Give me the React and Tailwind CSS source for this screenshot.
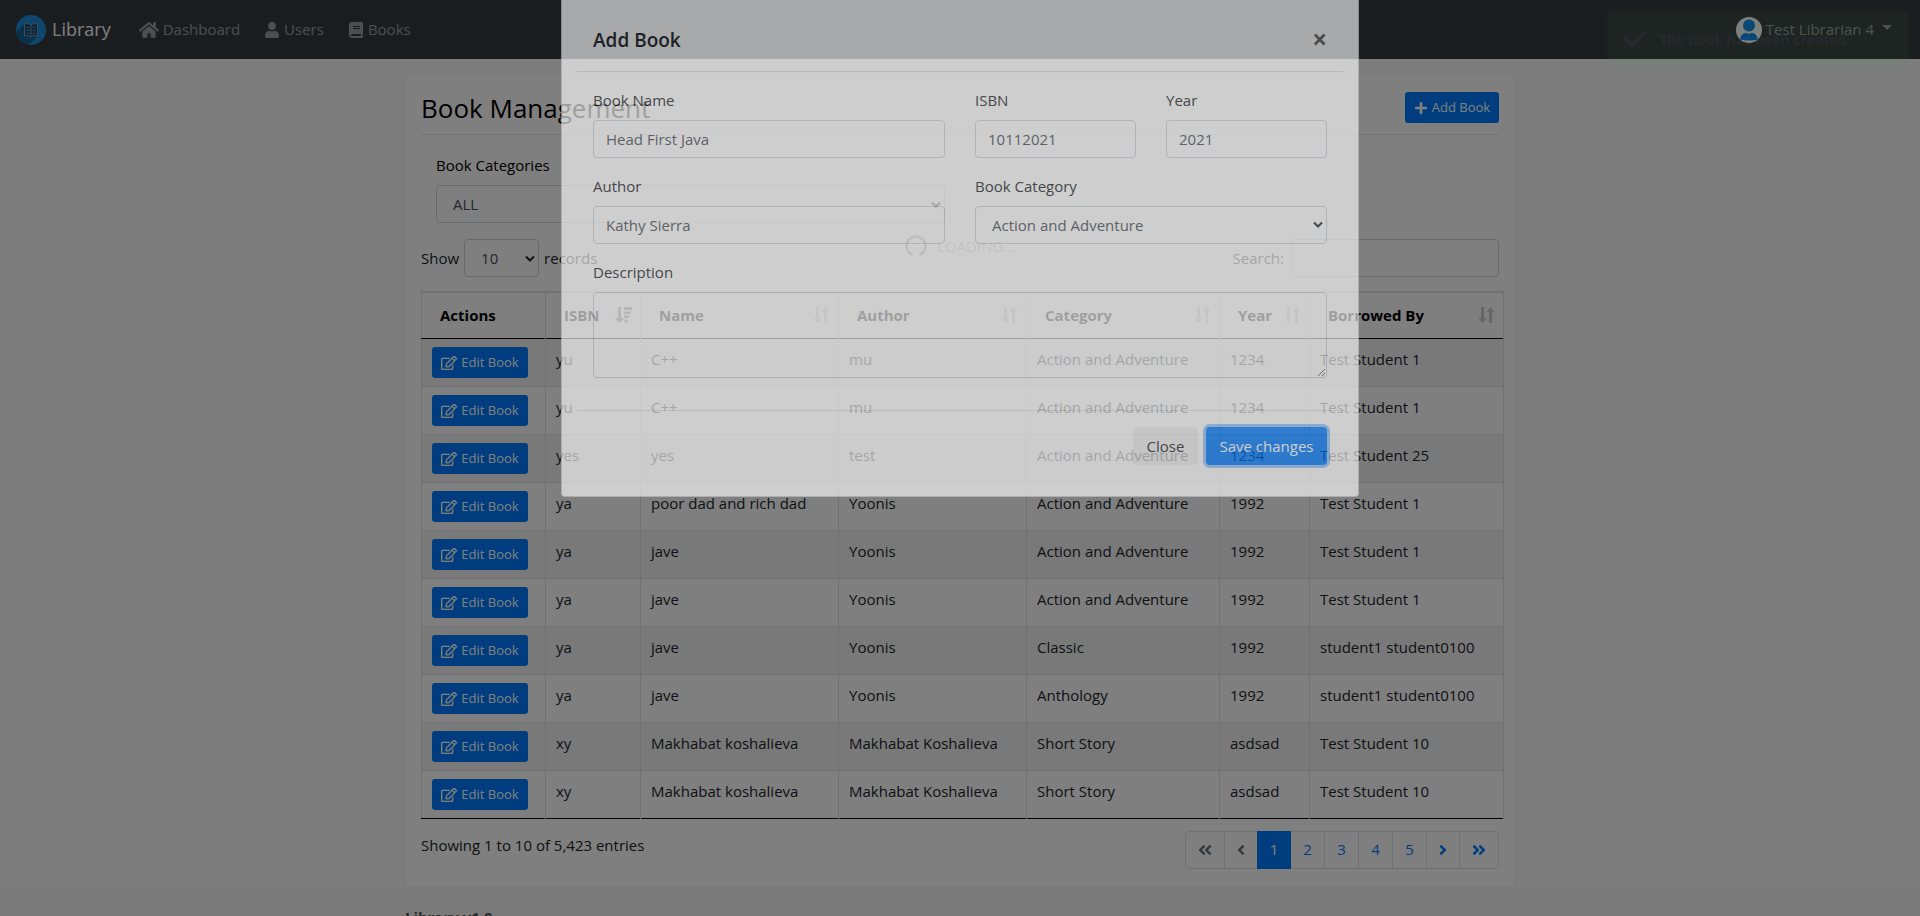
import { FaHome, FaUser, FaBook, FaPlus, FaRegEdit, FaCheck, FaAngleDoubleLeft, FaAngleLeft, FaAngleRight, FaAngleDoubleRight } from "react-icons/fa";

const rows = [
  ["yu", "C++", "mu", "Action and Adventure", "1234", "Test Student 1"],
  ["yu", "C++", "mu", "Action and Adventure", "1234", "Test Student 1"],
  ["yes", "yes", "test", "Action and Adventure", "1234", "Test Student 25"],
  ["ya", "poor dad and rich dad", "Yoonis", "Action and Adventure", "1992", "Test Student 1"],
  ["ya", "jave", "Yoonis", "Action and Adventure", "1992", "Test Student 1"],
  ["ya", "jave", "Yoonis", "Action and Adventure", "1992", "Test Student 1"],
  ["ya", "jave", "Yoonis", "Classic", "1992", "student1 student0100"],
  ["ya", "jave", "Yoonis", "Anthology", "1992", "student1 student0100"],
  ["xy", "Makhabat koshalieva", "Makhabat Koshalieva", "Short Story", "asdsad", "Test Student 10"],
  ["xy", "Makhabat koshalieva", "Makhabat Koshalieva", "Short Story", "asdsad", "Test Student 10"],
];

const columns = [
  ["Actions", "w-[124px]"],
  ["ISBN", "w-[95px]"],
  ["Name", "w-[198px]"],
  ["Author", "w-[188px]"],
  ["Category", "w-[193px]"],
  ["Year", "w-[90px]"],
  ["Borrowed By", "w-[194px]"],
];

const field = "block w-full h-[38px] rounded border border-[#ced4da] bg-white px-3 text-[15px] text-[#495057] outline-none";

function Chevron({ className }) {
  return (
    <svg viewBox="0 0 10 8" className={`pointer-events-none absolute w-[10px] h-2 ${className}`} aria-hidden="true">
      <path d="M1 1.5 5 5.500 9 1.5" fill="none" stroke="currentColor" strokeWidth="2" />
    </svg>
  );
}

function Logo() {
  return (
    <svg viewBox="0 0 30 30" className="size-[30px]" aria-hidden="true">
      <defs>
        <clipPath id="disc"><circle cx="15" cy="15" r="15" /></clipPath>
      </defs>
      <g clipPath="url(#disc)">
        <rect width="30" height="30" fill="#1f8ddb" />
        <path d="M8 9 0 17v13h12l10-9z" fill="#1a6090" />
        <path d="M8.500 9c2.500-.8 4.500-.5 6.500.8 2-1.300 4-1.600 6.500-.8v12c-2.500-.6-4.500-.4-6.500.8-2-1.200-4-1.400-6.500-.8z" fill="#17496e" stroke="#7fa3bd" strokeWidth="0.9" />
        <path d="M15 10v11.500M10.300 12l3 .6M10.300 15l3 .6M10.300 18l3 .6M19.700 12l-3 .6M19.700 15l-3 .6M19.700 18l-3 .6" stroke="#7fa3bd" strokeWidth="0.9" />
      </g>
    </svg>
  );
}

function Navbar() {
  const link = "flex items-center gap-1 text-[15px] text-white/50";
  return (
    <nav className="flex h-[59px] items-center bg-[#343a40] px-4">
      <a href="#home" className="flex items-center gap-[6px] text-[18px] text-white">
        <Logo />Library
      </a>
      <div className="ml-7 flex gap-6">
        <a href="#dashboard" className={link}><FaHome className="size-5" />Dashboard</a>
        <a href="#users" className={link}><FaUser className="size-4" />Users</a>
        <a href="#books" className={link}><FaBook className="size-4" />Books</a>
      </div>
      <a href="#account" className="ml-auto mr-3 flex items-center text-[15px] text-white/50">
        <svg viewBox="0 0 26 26" className="mr-1 size-[26px]" aria-hidden="true">
          <circle cx="13" cy="13" r="13" fill="#fff" />
          <circle cx="13" cy="8.500" r="6" fill="#0a84ee" />
          <path d="M4 22.500c.5-4.500 3.500-6.500 6-6.500 2 1 4 1 6 0 2.500 0 5.500 2 6 6.500-2 1.300-16 1.300-18 0z" fill="#0a84ee" />
        </svg>
        Test Librarian 4
        <span className="ml-2 mb-1 border-x-[5px] border-t-[5px] border-x-transparent border-t-white/50" />
      </a>
    </nav>
  );
}

function SortIcon({ name }) {
  if (name === "Actions") return null;
  if (name === "ISBN") {
    return (
      <svg viewBox="0 0 17 18" className="h-[18px] w-[17px] text-black/50" fill="currentColor" aria-hidden="true">
        <path d="M3 1h3v11h3L4.500 17 0 12h3zM9 1h8v3H9zM9 5.500h6.500v2.500H9zM9 9.500h5v2.500h-5zM9.500 13.500h3v3h-3z" />
      </svg>
    );
  }
  return (
    <svg viewBox="0 0 17 18" className="h-[18px] w-[17px] text-black/20" fill="currentColor" aria-hidden="true">
      <path d="M3 1h3v11h2.500L4.500 17 .500 12H3zM11 17h3V6h2.500l-4-5-4 5H11z" />
    </svg>
  );
}

function BookTable() {
  return (
    <table className="w-[1082px] table-fixed border-collapse border border-[#dee2e6] border-b-black">
      <thead>
        <tr className="h-[46px] border-b border-black text-black">
          {columns.map(([name, width]) => (
            <th key={name} scope="col" className={`${width} border-r border-t-2 border-r-[#dee2e6] border-t-[#dee2e6] pl-[18px] pr-2 text-left font-bold`}>
              <span className="flex items-center justify-between">
                {name}
                <SortIcon name={name} />
              </span>
            </th>
          ))}
        </tr>
      </thead>
      <tbody>
        {rows.map((row, i) => (
          <tr key={i} className="h-12 border-b border-[#dee2e6] odd:bg-[#f2f2f2] last:border-black">
            <td className="border-r border-[#dee2e6] px-[10px] pt-px">
              <button type="button" className="flex h-[31px] w-24 items-center justify-center gap-1 rounded-[3px] bg-[#007bff] text-[13px] text-white">
                <FaRegEdit className="size-4" />Edit Book
              </button>
            </td>
            {row.map((cell, j) => (
              <td key={j} className="border-r border-[#dee2e6] px-[10px] pt-2 align-top leading-6">{cell}</td>
            ))}
          </tr>
        ))}
      </tbody>
    </table>
  );
}

function Pagination() {
  const item = "h-[38px] border border-[#dee2e6] bg-white -ml-px flex items-center justify-center text-[#007bff]";
  return (
    <nav aria-label="Pages" className="flex">
      <button type="button" aria-label="First" className={`${item} w-10 rounded-l`}><FaAngleDoubleLeft className="size-4 text-[#6c757d]" /></button>
      <button type="button" aria-label="Previous" className={`${item} w-[34px]`}><FaAngleLeft className="size-4 text-[#6c757d]" /></button>
      <button type="button" aria-current="page" className="relative -ml-px h-[38px] w-[34px] bg-[#007bff] text-white">1</button>
      {[2, 3, 4, 5].map((n) => (
        <button key={n} type="button" className={`${item} w-[35px]`}>{n}</button>
      ))}
      <button type="button" aria-label="Next" className={`${item} w-[34px]`}><FaAngleRight className="size-4" /></button>
      <button type="button" aria-label="Last" className={`${item} w-10 rounded-r`}><FaAngleDoubleRight className="size-4" /></button>
    </nav>
  );
}

function BookPage() {
  return (
    <main className="mx-auto mt-[17px] w-full max-w-[1110px] rounded bg-white px-4 pt-4 pb-[18px] text-[#212529] shadow-[0_2px_4px_rgba(0,0,0,0.075)]">
      <header className="flex h-[43px] items-start justify-between border-b border-black/10">
        <h1 className="text-[26px] leading-8 font-normal text-black">Book Management</h1>
        <button type="button" className="flex h-[31px] w-[94px] items-center justify-center gap-1 rounded-[3px] bg-[#007bff] text-[13px] text-white">
          <FaPlus className="size-[14px]" />Add Book
        </button>
      </header>
      <div className="mt-[18px] ml-[15px] w-[509px]">
        <label htmlFor="categories" className="block h-8 leading-6 text-black">Book Categories</label>
        <div className="relative">
          <select id="categories" className={`${field} appearance-none px-4`}><option>ALL</option></select>
          <Chevron className="right-1 top-4" />
        </div>
      </div>
      <div className="mt-4 flex items-center justify-between">
        <div className="flex items-center gap-[5px]">
          <label htmlFor="count">Show</label>
          <div className="relative w-[75px]">
            <select id="count" className={`${field} appearance-none px-4`}><option>10</option></select>
            <Chevron className="right-1 top-4" />
          </div>
          <span>records</span>
        </div>
        <div className="flex items-center gap-2">
          <label htmlFor="search">Search:</label>
          <input id="search" className={`${field} max-w-[207px]`} />
        </div>
      </div>
      <div className="mt-[14px]"><BookTable /></div>
      <div className="mt-3 flex items-start justify-between">
        <p className="pt-[2px] leading-6">Showing 1 to 10 of 5,423 entries</p>
        <Pagination />
      </div>
    </main>
  );
}

function AddBookModal() {
  const label = "mb-2 block leading-6";
  return (
    <div role="dialog" aria-labelledby="modal-title" className="absolute inset-x-0 -top-[22px] mx-auto w-full max-w-[800px] px-px opacity-[0.62]">
      <div className="rounded border border-black/20 bg-white px-[15px] pt-[31px] pb-[15px] text-[#212529]">
        <header className="flex h-[62px] items-center justify-between border-b border-[#dee2e6] px-4">
          <h2 id="modal-title" className="text-[19px] font-semibold">Add Book</h2>
          <button type="button" aria-label="Dismiss" className="pb-1 text-[26px] leading-6 font-bold text-black/60">×</button>
        </header>
        <form className="grid grid-cols-4 gap-x-[30px] gap-y-4 px-4 pt-4 pb-8">
          <div className="col-span-2"><label htmlFor="name" className={label}>Book Name</label><input id="name" defaultValue="Head First Java" className={field} /></div>
          <div><label htmlFor="isbn" className={label}>ISBN</label><input id="isbn" defaultValue="10112021" className={field} /></div>
          <div><label htmlFor="year" className={label}>Year</label><input id="year" defaultValue="2021" className={field} /></div>
          <div className="col-span-2"><label htmlFor="author" className={label}>Author</label><input id="author" defaultValue="Kathy Sierra" className={field} /></div>
          <div className="col-span-2">
            <label htmlFor="category" className={label}>Book Category</label>
            <div className="relative">
              <select id="category" className={`${field} appearance-none px-4`}><option>Action and Adventure</option></select>
              <Chevron className="right-1 top-[15px]" />
            </div>
          </div>
          <div className="col-span-4"><label htmlFor="description" className={label}>Description</label><textarea id="description" className="block h-[86px] w-full resize-y rounded border border-[#ced4da] bg-white px-3 py-2 outline-none" /></div>
        </form>
        <footer className="flex justify-end gap-2 border-t border-[#dee2e6] px-4 py-4">
          <button type="button" className="h-[38px] w-[65px] rounded bg-black/5 text-[15px]">Close</button>
          <button type="button" className="h-[38px] w-[121px] rounded bg-[#007bff] text-[15px] text-white shadow-[0_0_0_3px_rgba(38,143,255,0.5)]">Save changes</button>
        </footer>
      </div>
    </div>
  );
}

export default function App() {
  return (
    <div className="relative h-screen overflow-hidden bg-[#f8faf8] font-['Open_Sans','Noto_Sans',sans-serif] text-[15px]">
      <Navbar />
      <BookPage />
      <footer className="h-24 bg-[#f6f5f5] pt-[18px] text-[#555]">
        <p className="mx-auto max-w-[1110px] font-bold leading-6">Library v1.0</p>
      </footer>
      <div className="absolute inset-0 bg-black/50" />
      <AddBookModal />
      <div className="absolute inset-x-0 top-[235px] flex items-center justify-center gap-[10px] text-[15px] leading-[22px] text-black/8">
        <svg viewBox="0 0 22 22" className="size-[22px]" aria-hidden="true">
          <circle cx="11" cy="11" r="9.500" fill="none" stroke="currentColor" strokeWidth="2.500" strokeDasharray="52 8" transform="rotate(110 11 11)" />
        </svg>
        LOADING...
      </div>
      <div role="status" className="absolute right-3 top-3 flex h-[54px] w-[300px] items-center gap-3 rounded-[3px] bg-[#51a351] px-[15px] text-[14px] font-bold text-white opacity-[0.05] shadow-[0_0_12px_#999]">
        <FaCheck className="size-6" />The book has been created.
      </div>
    </div>
  );
}
